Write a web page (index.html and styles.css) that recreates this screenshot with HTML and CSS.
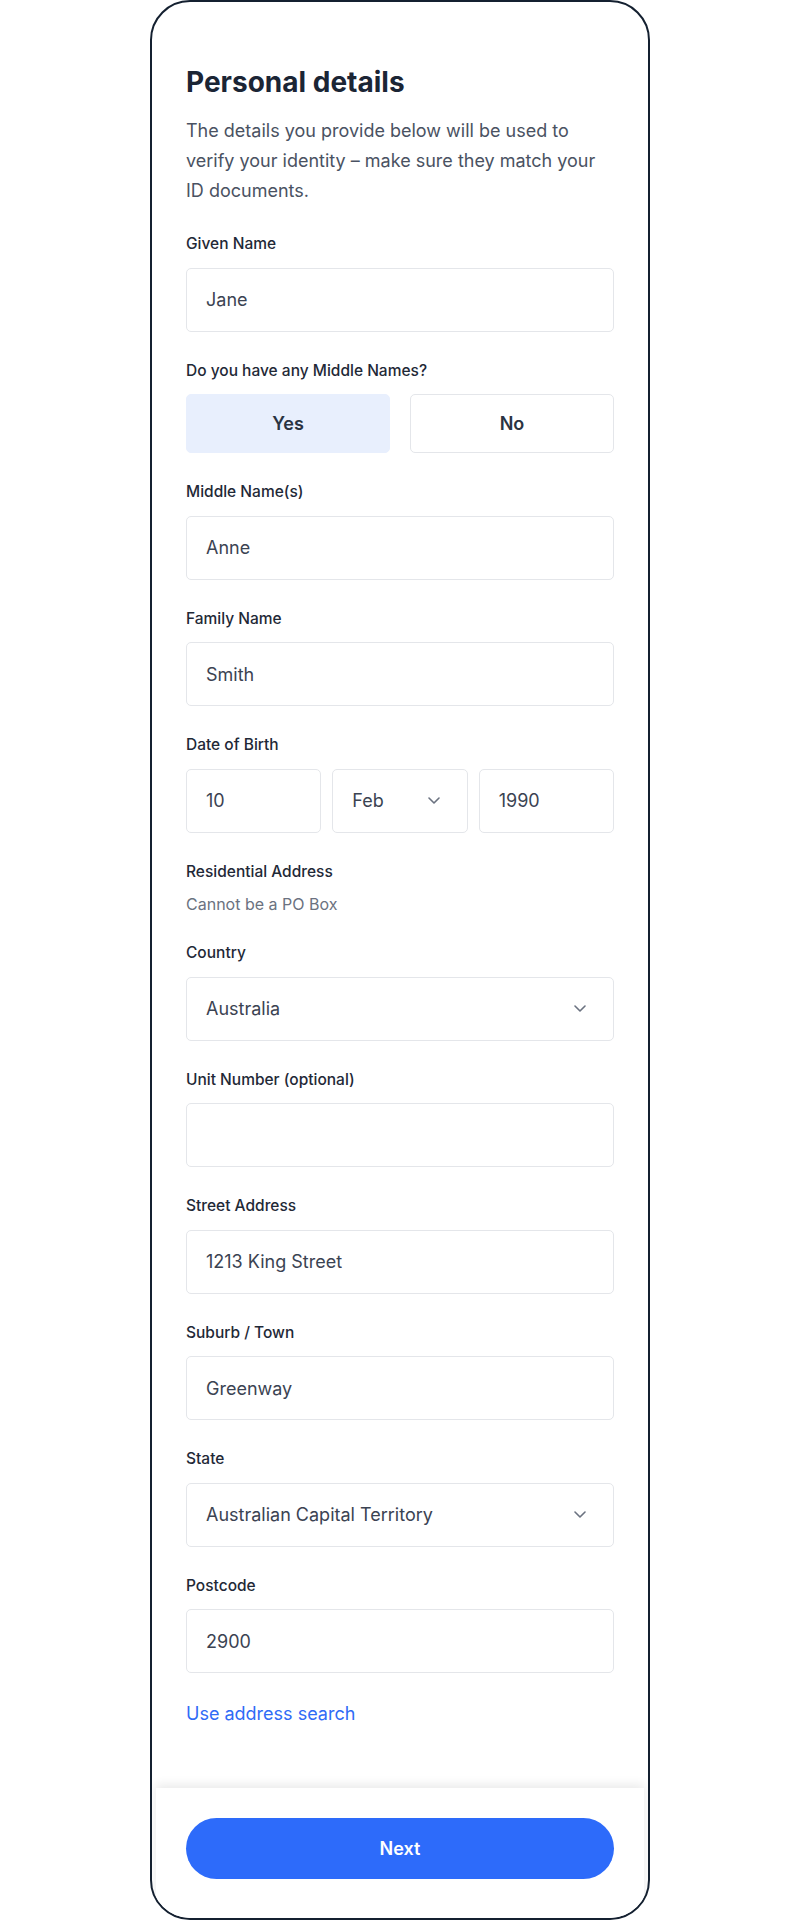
FILE: index.html
```html
<!DOCTYPE html>
<html lang="en">
<head>
<meta charset="utf-8">
<title>Personal details</title>
<link rel="stylesheet" href="styles.css">
</head>
<body>
<div class="phone">
  <main class="content">
    <h1 class="title">Personal details</h1>
    <p class="intro">The details you provide below will be used to verify your identity – make sure they match your ID documents.</p>

    <div class="field">
      <div class="label">Given Name</div>
      <div class="input">Jane</div>
    </div>

    <div class="field">
      <div class="label">Do you have any Middle Names?</div>
      <div class="choice">
        <div class="option selected">Yes</div>
        <div class="option">No</div>
      </div>
    </div>

    <div class="field">
      <div class="label">Middle Name(s)</div>
      <div class="input">Anne</div>
    </div>

    <div class="field">
      <div class="label">Family Name</div>
      <div class="input">Smith</div>
    </div>

    <div class="field">
      <div class="label">Date of Birth</div>
      <div class="dob">
        <div class="input">10</div>
        <div class="input select">Feb
          <svg class="chev" width="12" height="7" viewBox="0 0 12 7"><path d="M1 1l5 5 5-5" fill="none" stroke="#6b7280" stroke-width="1.6" stroke-linecap="round" stroke-linejoin="round"/></svg>
        </div>
        <div class="input">1990</div>
      </div>
    </div>

    <div class="field">
      <div class="label">Residential Address</div>
      <div class="hint">Cannot be a PO Box</div>
    </div>

    <div class="field">
      <div class="label">Country</div>
      <div class="input select">Australia
        <svg class="chev" width="12" height="7" viewBox="0 0 12 7"><path d="M1 1l5 5 5-5" fill="none" stroke="#6b7280" stroke-width="1.6" stroke-linecap="round" stroke-linejoin="round"/></svg>
      </div>
    </div>

    <div class="field">
      <div class="label">Unit Number (optional)</div>
      <div class="input"></div>
    </div>

    <div class="field">
      <div class="label">Street Address</div>
      <div class="input">1213 King Street</div>
    </div>

    <div class="field">
      <div class="label">Suburb / Town</div>
      <div class="input">Greenway</div>
    </div>

    <div class="field">
      <div class="label">State</div>
      <div class="input select">Australian Capital Territory
        <svg class="chev" width="12" height="7" viewBox="0 0 12 7"><path d="M1 1l5 5 5-5" fill="none" stroke="#6b7280" stroke-width="1.6" stroke-linecap="round" stroke-linejoin="round"/></svg>
      </div>
    </div>

    <div class="field">
      <div class="label">Postcode</div>
      <div class="input">2900</div>
    </div>

    <a class="link" href="#">Use address search</a>
  </main>
  <footer class="footer">
    <button class="next" type="button">Next</button>
  </footer>
</div>
</body>
</html>
```

FILE: styles.css
```css
* { box-sizing: border-box; }

html, body {
  margin: 0;
  padding: 0;
  background: #ffffff;
}

body {
  font-family: "Inter", "Noto Sans", sans-serif;
  color: #1f2937;
}

.phone {
  width: 500px;
  height: 1920px;
  margin: 0 auto;
  border: 2px solid #142030;
  border-radius: 40px;
  display: flex;
  flex-direction: column;
  overflow: hidden;
  background: #ffffff;
}

.content {
  flex: 1;
  padding: 63px 34px 0;
  display: flex;
  flex-direction: column;
}

.title {
  margin: 0;
  font-size: 28px;
  line-height: 34px;
  font-weight: 700;
  color: #1b2535;
}

.intro {
  margin: 17px 0 28px;
  font-size: 18px;
  line-height: 30px;
  color: #4a5262;
}

.field {
  margin-bottom: 29px;
  display: flex;
  flex-direction: column;
}

.label {
  font-size: 15.5px;
  line-height: 20px;
  font-weight: 500;
  color: #1f2937;
  margin-bottom: 13.5px;
}

.hint {
  margin-top: -1px;
  font-size: 16px;
  line-height: 20px;
  color: #6b7280;
}

.input {
  height: 64px;
  border: 1.5px solid #e4e6ea;
  border-radius: 5px;
  padding: 0 19px;
  display: flex;
  align-items: center;
  font-size: 18px;
  color: #3b4352;
  background: #ffffff;
}

.select {
  justify-content: space-between;
  padding-right: 27px;
}

.choice {
  display: grid;
  grid-template-columns: 1fr 1fr;
  gap: 20px;
}

.option {
  height: 59px;
  border: 1.5px solid #e4e6ea;
  border-radius: 5px;
  display: flex;
  align-items: center;
  justify-content: center;
  font-size: 18px;
  font-weight: 600;
  color: #2a3342;
}

.option.selected {
  background: #e8effd;
  border-color: #e8effd;
}

.dob {
  display: grid;
  grid-template-columns: 1fr 1fr 1fr;
  gap: 11px;
}

.link {
  font-size: 18px;
  line-height: 24px;
  color: #2f6bf6;
  text-decoration: none;
  align-self: flex-start;
}

.footer {
  margin: 0 4px;
  height: 130px;
  padding: 30px 30px 0;
  background: #ffffff;
  box-shadow: 0 -3px 10px rgba(0, 0, 0, 0.09);
}

.next {
  width: 100%;
  height: 61px;
  border: none;
  border-radius: 31px;
  background: #2d6bfa;
  color: #ffffff;
  font-family: inherit;
  font-size: 18px;
  font-weight: 600;
  cursor: pointer;
}
```
